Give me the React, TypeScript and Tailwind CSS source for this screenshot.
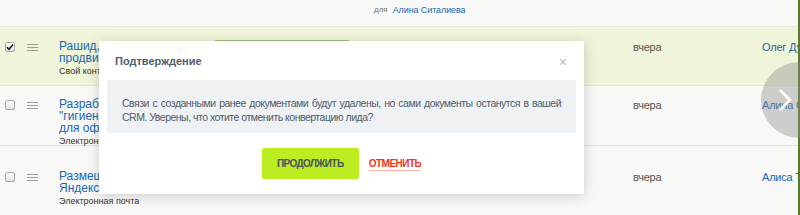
import React from 'react';

const font = { fontFamily: '"Liberation Sans", Arial, sans-serif' };

function Checkbox({ checked }: { checked?: boolean }) {
  return (
    <span className="flex h-[10px] w-[10px] shrink-0 items-center justify-center rounded-[2px] border border-[#a9a9a9] bg-gradient-to-b from-[#fdfdfd] to-[#e2e2e2]">
      {checked && (
        <svg width="8" height="8" viewBox="0 0 8 8">
          <path d="M1 4.2 L3 6.3 L7 1.4" fill="none" stroke="#222" strokeWidth="1.6" />
        </svg>
      )}
    </span>
  );
}

function Handle() {
  return (
    <span className="flex w-[11px] flex-col gap-[2px]">
      <span className="h-px bg-[#9c9c9c]" />
      <span className="h-px bg-[#9c9c9c]" />
      <span className="h-px bg-[#9c9c9c]" />
    </span>
  );
}

type Row = {
  title: string[];
  sub: string;
  name: string;
  green?: boolean;
  clipSub?: boolean;
  h: string;
  pt: string;
};

const rows: Row[] = [
  { title: ['Рашид, создать', 'продвижение'], sub: 'Свой контакт', name: 'Олег Дудин', green: true, clipSub: true, h: 'h-[59px]', pt: 'pt-[13px]' },
  { title: ['Разработка', '"гигиенических"', 'для офиса'], sub: 'Электронная почта', name: 'Алина Ситалиева', clipSub: true, h: 'h-[60px]', pt: 'pt-[12px]' },
  { title: ['Размещение', 'Яндексе'], sub: 'Электронная почта', name: 'Алиса Тарасова', h: 'h-[70px]', pt: 'pt-[24px]' },
];

export default function App() {
  return (
    <div className="relative h-[215px] w-[800px] overflow-hidden bg-[#f8f8f6] text-[#333]" style={font}>
      {/* top band */}
      <div className="flex h-[27px] items-start border-b border-[#e6e6e4] pl-[374px] pt-[4px]">
        <span className="text-[8px] leading-[12px] text-[#777]">для</span>
        <span className="ml-[5px] text-[9px] leading-[12px] tracking-[-0.1px] text-[#2067b0]">Алина Ситалиева</span>
      </div>

      {/* rows */}
      {rows.map((r, i) => (
        <div
          key={i}
          className={`flex ${r.h} ${r.pt} items-start border-b border-[#e3e3e1] ${r.green ? 'bg-[#eef5d9]' : 'bg-[#f8f8f6]'}`}
        >
          <div className="flex w-[59px] shrink-0 items-center pl-[5px] pt-[2px]">
            <Checkbox checked={r.green} />
            <span className="ml-[12px]">
              <Handle />
            </span>
          </div>
          <div className="w-[574px] shrink-0">
            <div className="w-[40px] overflow-hidden">
              {r.title.map((t) => (
                <div key={t} className="whitespace-nowrap text-[12px] leading-[12px] text-[#2067b0]">
                  {t}
                </div>
              ))}
            </div>
            <div className={`mt-[1px] whitespace-nowrap text-[9px] leading-[12px] text-[#333] ${r.clipSub ? 'w-[40px] overflow-hidden' : ''}`}>
              {r.sub}
            </div>
          </div>
          <div className="w-[129px] shrink-0 pt-[1px] text-[11px] leading-[12px] tracking-[-0.2px] text-[#555]">вчера</div>
          <div className="shrink-0 whitespace-nowrap pt-[1px] text-[11px] leading-[12px] tracking-[-0.2px] text-[#2067b0]">{r.name}</div>
        </div>
      ))}

      {/* green progress bar peeking above the dialog */}
      <div className="absolute left-[215px] top-[40px] h-[2px] w-[134px] bg-[#9fbb75]" />

      {/* right edge strip */}
      <div className="absolute right-0 top-0 h-full w-[2px] bg-[#5b7a2c]" />

      {/* slider arrow circle */}
      <div className="absolute left-[761px] top-[62px] flex h-[76px] w-[76px] items-center rounded-full bg-[#8d8d8d]/40 pl-[17px]">
        <svg width="14" height="24" viewBox="0 0 14 24">
          <path d="M2 2 L12 12 L2 22" fill="none" stroke="#fff" strokeWidth="2.5" />
        </svg>
      </div>

      {/* dialog */}
      <div className="absolute left-[99px] top-[41px] flex h-[153px] w-[485px] flex-col bg-white/[0.97] shadow-[0_2px_12px_rgba(0,0,0,0.18)]">
        <div className="flex h-[39px] items-center justify-between pl-[16px] pr-[17px] pt-[2px]">
          <span className="text-[11px] font-bold text-[#535c69]">Подтверждение</span>
          <span className="text-[14px] leading-none text-[#b8b8b8]">×</span>
        </div>
        <div className="mx-[8px] bg-[#eef2f4] px-[15px] pb-[9px] pt-[16px] text-justify text-[10.5px] leading-[14px] tracking-[-0.5px] text-[#535c69]">
          Связи с созданными ранее документами будут удалены, но сами документы останутся в вашей CRM. Уверены, что хотите отменить конвертацию лида?
        </div>
        <div className="mt-[15px] flex items-center justify-center gap-[10px]">
          <button className="h-[31px] w-[97px] rounded-[2px] bg-[#bbed21] text-[10px] font-bold tracking-[-0.6px] text-[#4a525e]">
            ПРОДОЛЖИТЬ
          </button>
          <button className="border-b border-[#f9b4a8] text-[10px] font-bold leading-[13px] tracking-[-0.5px] text-[#f1361b]">
            ОТМЕНИТЬ
          </button>
        </div>
      </div>
    </div>
  );
}
